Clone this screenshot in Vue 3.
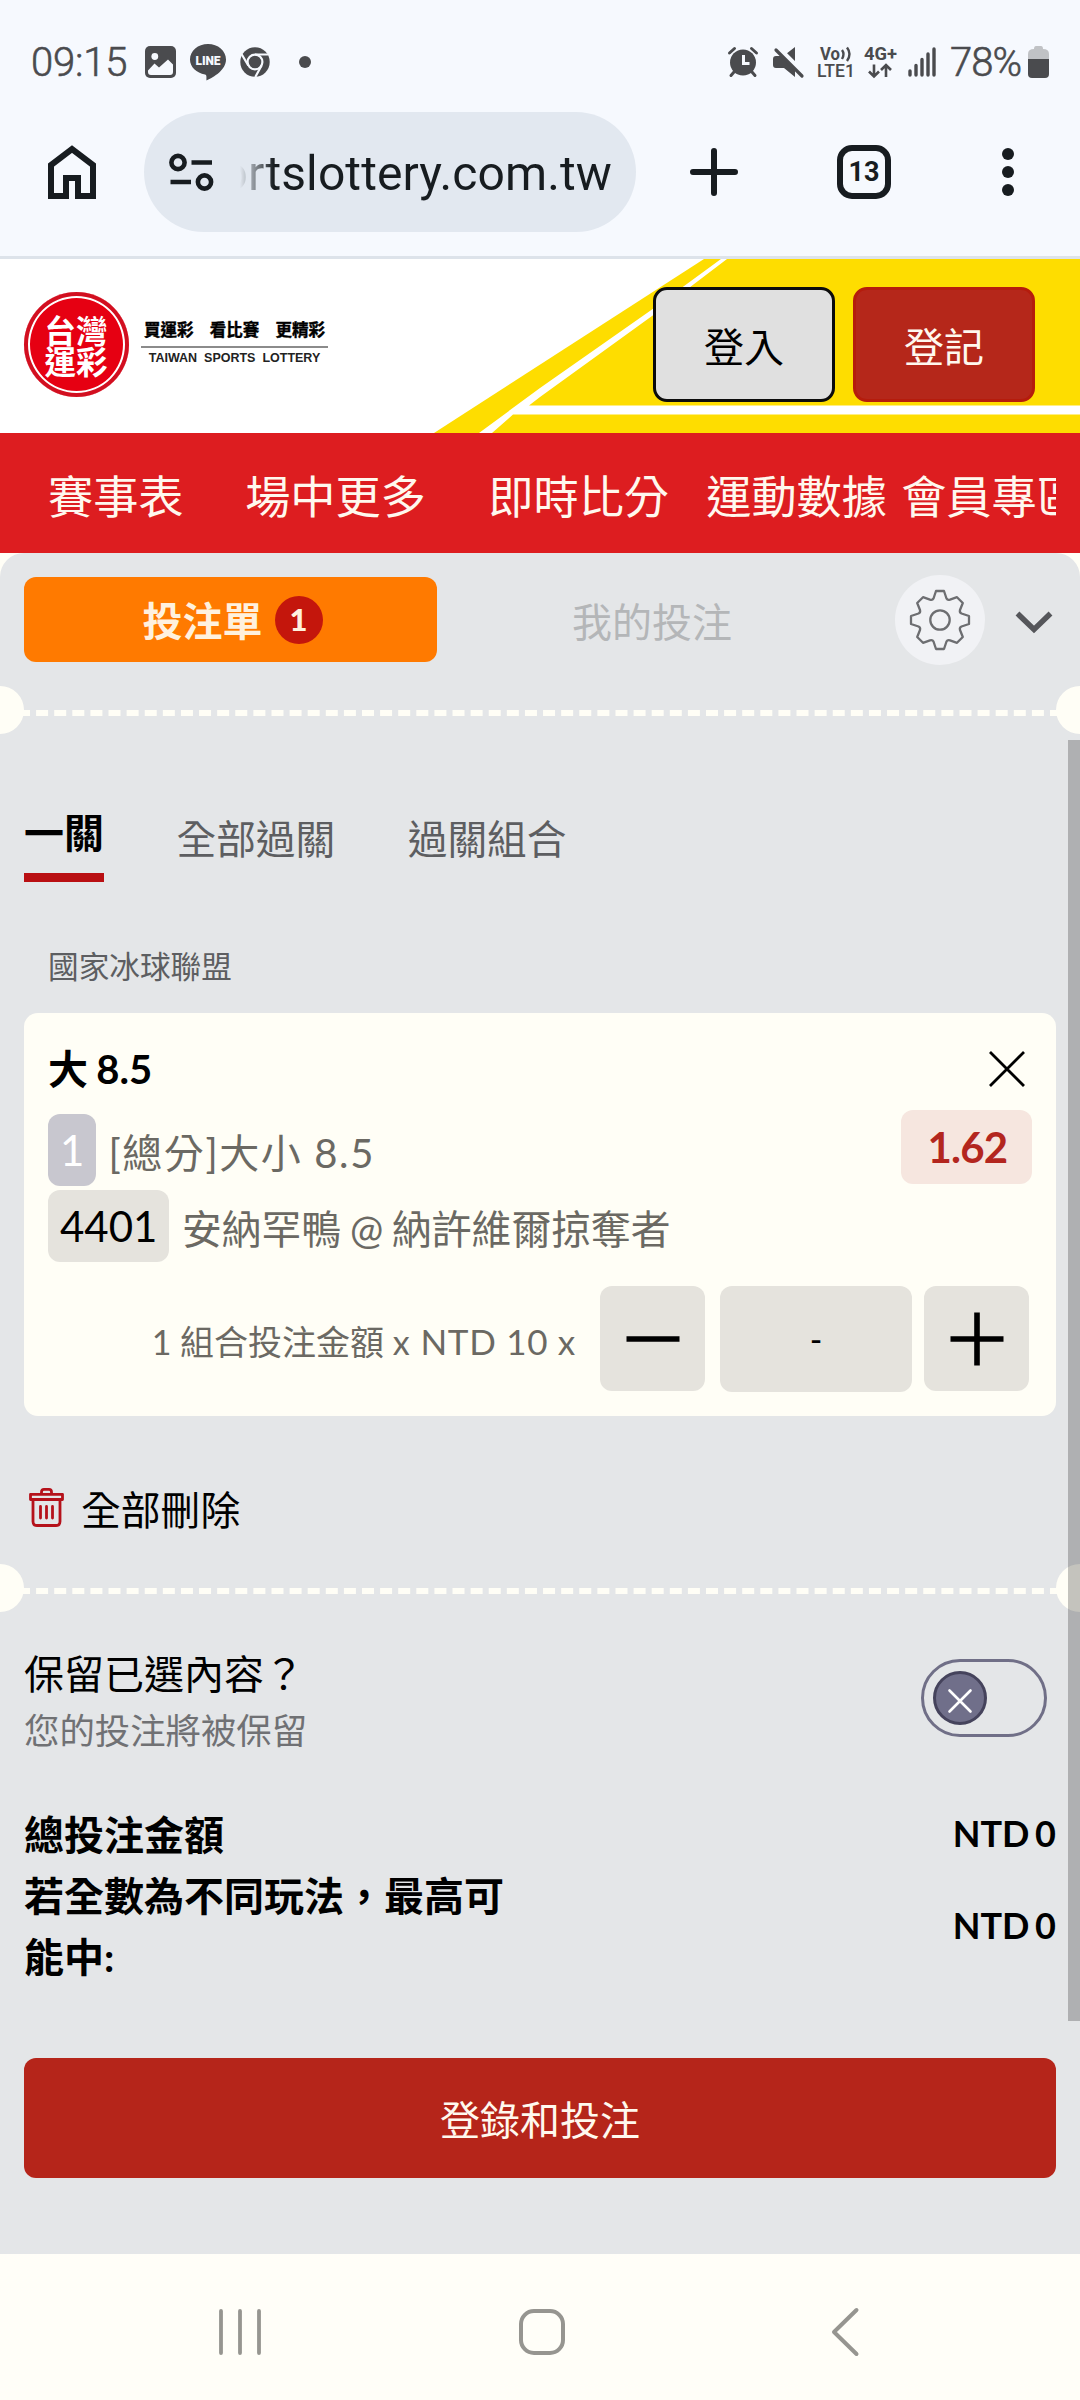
<script setup>
import { ref } from 'vue'

const navItems = [
  { label: '賽事表', gap: 61.6 },
  { label: '場中更多', gap: 62.4 },
  { label: '即時比分', gap: 37.2 },
  { label: '運動數據', gap: 14.2 },
  { label: '會員專區', gap: 0 },
]
const modes = ['一關', '全部過關', '過關組合']
const activeMode = ref(0)
const slogans = ['買運彩', '看比賽', '更精彩']
const totals = [
  { label: '總投注金額', value: 'NTD 0' },
  { label: '若全數為不同玩法，最高可能中:', value: 'NTD 0' },
]
</script>

<template>
  <div class="screen">
    <div class="status">
      <span class="clock">09:15</span>
      <svg class="s-img" width="31" height="32" viewBox="0 0 31 32">
        <rect width="31" height="32" rx="5" fill="#4a4b4e" />
        <circle cx="9.800" cy="10.500" r="3.400" fill="#f6f9fe" />
        <path d="M3 24.500 9.500 17.500 14 21.500 23 13.500 28 18.500V26Q28 29 25 29H6Q3 29 3 26Z" fill="#f6f9fe" />
      </svg>
      <svg class="s-line" width="36" height="37" viewBox="0 0 36 37">
        <path d="M18 0C8 0 0 6.800 0 15.500 0 23 6.500 29 15 30.500 17 31 16.300 33.500 16.500 36.500 24 33 36 26 36 15.500 36 6.800 28 0 18 0Z" fill="#4a4b4e" />
        <text x="18" y="20.600" text-anchor="middle" textLength="25" font-size="12" font-weight="900" font-family="Roboto, sans-serif" fill="#f6f9fe">LINE</text>
      </svg>
      <svg class="s-chrome" width="30" height="30" viewBox="0 0 30 30">
        <circle cx="15" cy="15" r="14.700" fill="#4a4b4e" />
        <circle cx="15" cy="15" r="7.400" fill="#4a4b4e" stroke="#f6f9fe" stroke-width="2.200" />
        <path d="M15 7.500H28.500M8.300 18.500 1.500 7M21.600 18.500 15.300 30" stroke="#f6f9fe" stroke-width="2.200" fill="none" />
      </svg>
      <i class="dot"></i>
      <div class="status-right">
        <svg width="30" height="30" viewBox="0 0 30 30">
          <circle cx="15" cy="15.500" r="13" fill="#4a4b4e" />
          <path d="M1.500 6 6.500 1.500M28.500 6 23.500 1.500M6 25 3 28.500M24 25 27 28.500" stroke="#4a4b4e" stroke-width="3" stroke-linecap="round" />
          <path d="M15.500 8V16.500H21.500" stroke="#f6f9fe" stroke-width="3" fill="none" />
        </svg>
        <svg class="mute" width="31" height="31" viewBox="0 0 31 31">
          <path d="M22 0V14.500L13 7ZM3 9H8L22 23V30L11 21H3Q0 21 0 18V12Q0 9 3 9Z" fill="#4a4b4e" />
          <path d="M6 0 31 25" stroke="#f6f9fe" stroke-width="2.500" />
          <path d="M3 3 29 29" stroke="#4a4b4e" stroke-width="3.200" stroke-linecap="round" />
        </svg>
        <svg class="volte" width="38" height="32" viewBox="0 0 38 32">
          <g font-family="Roboto, sans-serif" fill="#4a4b4e">
            <text x="3" y="13.500" font-size="18" font-weight="700" textLength="20" lengthAdjust="spacingAndGlyphs">Vo</text>
            <text x="0" y="31" font-size="19" font-weight="500" textLength="38" lengthAdjust="spacingAndGlyphs">LTE1</text>
          </g>
          <path d="M25 4Q28 8 25 13M30 1.500Q35 8 30 15" fill="none" stroke="#4a4b4e" stroke-width="2.400" />
        </svg>
        <svg class="lte" width="33" height="32" viewBox="0 0 33 32">
          <text x="0" y="13.500" font-size="18" font-family="Roboto, sans-serif" font-weight="700" fill="#4a4b4e" textLength="33" lengthAdjust="spacingAndGlyphs">4G+</text>
          <path d="M10 18.500V30M5 25.500 10 30.500 15 25.500M22 31V19.500M17 24 22 19 27 24" fill="none" stroke="#4a4b4e" stroke-width="2.600" />
        </svg>
        <svg class="signal" width="28" height="30" viewBox="0 0 28 30">
          <path d="M2 24V28M8 18.500V28M14 12.500V28M20 7V28M26 2V28" stroke="#4a4b4e" stroke-width="3.400" stroke-linecap="round" />
        </svg>
        <span class="pct">78%</span>
        <svg class="batt" width="21" height="32" viewBox="0 0 21 32">
          <path d="M6 3Q6 0 8 0H13Q15 0 15 3 21 3 21 8V14H0V8Q0 3 6 3Z" fill="#c0c2c5" />
          <path d="M0 13H21V28Q21 32 17 32H4Q0 32 0 28Z" fill="#4a4b4e" />
        </svg>
      </div>
    </div>

    <div class="browser">
      <svg class="home" width="48" height="54" viewBox="0 0 48 54">
        <path d="M3 51V20L24 4 45 20V51H30V33H18V51Z" fill="none" stroke="#171c20" stroke-width="6" />
      </svg>
      <div class="omnibox">
        <svg width="45" height="39" viewBox="0 0 45 39">
          <g fill="none" stroke="#171c20" stroke-width="4.600">
            <circle cx="9" cy="9.500" r="6.600" /><circle cx="35.500" cy="29" r="6.600" />
            <path d="M22.500 9.500H43M1.500 29H22" />
          </g>
        </svg>
        <div class="url"><span>sportslottery.com.tw</span></div>
      </div>
      <svg class="plus" width="48" height="48" viewBox="0 0 48 48"><path d="M24 3V45M3 24H45" stroke="#171c20" stroke-width="6" stroke-linecap="round" /></svg>
      <div class="tabs-count">13</div>
      <svg class="more" width="12" height="48" viewBox="0 0 12 48"><g fill="#171c20"><circle cx="6" cy="6" r="6" /><circle cx="6" cy="24" r="6" /><circle cx="6" cy="42" r="6" /></g></svg>
    </div>

    <header class="site-head">
      <svg class="rays" width="646" height="174" viewBox="434 259 646 174">
        <path d="M434 433 704 259H1080V433Z" fill="#fedd00" />
        <path d="M479 433 540 388 652 309.500 721 259H727L652 316 540 397 529 405.500H1080V414.500H513L492 433Z" fill="#fff" />
      </svg>
      <div class="brand">
        <div class="seal"><div>台灣運彩</div></div>
        <div class="brand-text">
          <div class="slogan"><span v-for="s in slogans" :key="s">{{ s }}</span></div>
          <div class="brand-en">TAIWAN&nbsp; SPORTS&nbsp; LOTTERY</div>
        </div>
      </div>
      <button class="btn login">登入</button>
      <button class="btn register">登記</button>
    </header>

    <nav class="nav">
      <div class="nav-clip">
        <a v-for="n in navItems" :key="n.label" :style="{ marginRight: n.gap + 'px' }">{{ n.label }}</a>
      </div>
    </nav>

    <main class="slip-wrap">
      <div class="slip">
        <div class="slip-tabs">
          <div class="slip-tab active"><span>投注單</span><b>1</b></div>
          <div class="slip-tab">我的投注</div>
          <div class="gear">
            <svg width="62" height="62" viewBox="-31 -31 62 62" fill="none" stroke="#6d6e71" stroke-width="2.300" stroke-linejoin="round">
              <circle r="9.700" />
              <path d="M-4 -29H4L6.500 -21.500Q7.500 -19.500 10 -20.300L17 -22.800 22.800 -17 20 -10Q19.300 -7.500 21.500 -6.500L29 -4V4L21.500 6.500Q19.300 7.500 20 10L22.800 17 17 22.800 10 20.300Q7.500 19.500 6.500 21.500L4 29H-4L-6.500 21.500Q-7.500 19.500 -10 20.300L-17 22.800 -22.800 17 -20 10Q-19.300 7.500 -21.500 6.500L-29 4V-4L-21.500 -6.500Q-19.300 -7.500 -20 -10L-22.800 -17 -17 -22.800 -10 -20.300Q-7.500 -19.500 -6.500 -21.500Z" />
            </svg>
          </div>
          <svg class="chev" width="38" height="22" viewBox="0 0 38 22"><path d="M2.500 2.500 19 18.500 35.500 2.500" fill="none" stroke="#55565a" stroke-width="5.500" /></svg>
        </div>

        <div class="perf"><i></i></div>

        <div class="modes">
          <span v-for="(m, i) in modes" :key="m" :class="{ on: i === activeMode }" @click="activeMode = i">{{ m }}</span>
        </div>

        <div class="league">國家冰球聯盟</div>

        <section class="card">
          <div class="pick">
            <strong>大 8.5</strong>
            <svg width="36" height="36" viewBox="0 0 36 36"><path d="M1 1 35 35M35 1 1 35" stroke="#000" stroke-width="2.800" /></svg>
          </div>
          <div class="market">
            <span class="tag min">1</span><span class="market-name">[總分]大小 8.5</span>
            <span class="odds">1.62</span>
          </div>
          <div class="match"><span class="tag">4401</span><span class="teams">安納罕鴨 @ 納許維爾掠奪者</span></div>
          <div class="stake">
            <span class="stake-label">1 組合投注金額 x <em>NTD 10 x</em></span>
            <button class="step"><svg width="54" height="54" viewBox="0 0 54 54"><path d="M0.500 27H53.500" stroke="#000" stroke-width="5.600" /></svg></button>
            <span class="amount">-</span>
            <button class="step"><svg width="54" height="54" viewBox="0 0 54 54"><path d="M0.500 27H53.500M27 0.500V53.500" stroke="#000" stroke-width="5.600" /></svg></button>
          </div>
        </section>

        <div class="clear">
          <svg width="35" height="39" viewBox="0 0 35 39" fill="none" stroke="#b5121b" stroke-width="2.800" stroke-linejoin="round" stroke-linecap="round">
            <path d="M1.500 6.300H33.500V11.500H1.500ZM12.500 6V4Q12.500 1.400 15 1.400H20Q22.500 1.400 22.500 4V6M4 11.500V33.500Q4 37.500 8 37.500H27Q31 37.500 31 33.500V11.500M11.500 18.500V30M17.500 18.500V30M23.500 18.500V30" />
          </svg>
          <span>全部刪除</span>
        </div>

        <div class="perf second"><i></i></div>

        <div class="keep">
          <div>
            <div class="keep-title">保留已選內容？</div>
            <div class="keep-sub">您的投注將被保留</div>
          </div>
          <div class="toggle">
            <div class="knob"><svg width="24" height="24" viewBox="0 0 24 24"><path d="M1.500 1.500 22.500 22.500M22.500 1.500 1.500 22.500" stroke="#fff" stroke-width="2.600" stroke-linecap="round" /></svg></div>
          </div>
        </div>

        <div class="totals">
          <div v-for="t in totals" :key="t.label" class="total"><span class="t-label">{{ t.label }}</span><span class="t-val">{{ t.value }}</span></div>
        </div>

        <button class="submit">登錄和投注</button>
        <div class="scrollbar"></div>
      </div>
    </main>

    <footer class="sysnav">
      <svg width="42" height="46" viewBox="0 0 42 46"><path d="M2 2V44M21 2V44M40 2V44" stroke="#969590" stroke-width="3.800" stroke-linecap="round" /></svg>
      <svg class="sys-home" width="46" height="46" viewBox="0 0 46 46"><rect x="2" y="2" width="42" height="42" rx="13" fill="none" stroke="#969590" stroke-width="4" /></svg>
      <svg class="sys-back" width="28" height="48" viewBox="0 0 28 48"><path d="M25.500 2 3 24 25.500 46" fill="none" stroke="#969590" stroke-width="4" stroke-linecap="round" stroke-linejoin="round" /></svg>
    </footer>
  </div>
</template>

<style>
body { margin: 0; background: #fffef6; }
</style>

<style scoped>
* { box-sizing: border-box; }
.screen {
  width: 1080px;
  height: 2400px;
  overflow: hidden;
  display: flex;
  flex-direction: column;
  background: #fffef6;
  font-family: Lato, "Noto Sans CJK TC", sans-serif;
  font-size: 40px;
  line-height: 60px;
  color: #000;
}
svg { display: block; flex: none; overflow: visible; }
button { border: 0; padding: 0; margin: 0; font: inherit; color: inherit; display: flex; align-items: center; justify-content: center; }

.status { height: 112px; background: #f6f9fe; display: flex; align-items: center; padding: 12px 31px 0; font-family: Roboto, sans-serif; color: #4a4b4e; }
.clock { font-size: 40px; width: 114px; letter-spacing: -0.2px; font-weight: 300; -webkit-text-stroke: 0.6px #4a4b4e; padding-top: 2px; }
.s-line { margin-left: 14px; }
.s-chrome { margin-left: 14px; }
.dot { width: 12px; height: 12px; border-radius: 50%; background: #4a4b4e; margin-left: 29px; }
.status-right { margin-left: auto; display: flex; align-items: center; }
.mute { margin-left: 15px; }
.volte { margin-left: 13px; }
.lte { margin-left: 9px; }
.signal { margin-left: 11px; }
.pct { margin-left: 14px; font-size: 40px; width: 72px; letter-spacing: -1px; white-space: nowrap; font-weight: 300; -webkit-text-stroke: 0.6px #4a4b4e; padding-top: 2px; }
.batt { margin-left: 6px; }

.browser { height: 147px; background: #f6f9fe; border-bottom: 3px solid #dde3ea; display: flex; align-items: center; padding: 0 66px 24px 48px; }
.omnibox { margin-left: 48px; width: 492px; height: 120px; border-radius: 60px; background: #e2e8f0; display: flex; align-items: center; padding: 0 24px 0 25px; }
.url { margin-left: 26px; flex: 1; overflow: hidden; display: flex; justify-content: flex-end; padding-top: 3px; font: 400 48px/64px Roboto, sans-serif; letter-spacing: 0.1px; color: #171c20; -webkit-mask-image: linear-gradient(90deg, transparent 0, #000 34px); mask-image: linear-gradient(90deg, transparent 0, #000 34px); }
.plus { margin-left: 54px; }
.tabs-count { margin-left: 99px; width: 54px; height: 54px; border: 6px solid #171c20; border-radius: 15px; font: 700 27px/43px Roboto, sans-serif; text-align: center; color: #171c20; }
.more { margin-left: auto; }

.site-head { position: relative; height: 174px; background: #fff; display: flex; align-items: center; padding: 0 45px 3px 24px; }
.rays { position: absolute; right: 0; top: 0; }
.brand { flex: 1; display: flex; align-items: center; }
.seal { width: 105px; height: 105px; border-radius: 50%; background: #e60012; box-shadow: inset 0 0 0 4px #d20f20, inset 0 0 0 6px #fff; color: #fff; display: flex; align-items: center; justify-content: center; font: 700 31.500px/31px "Noto Sans CJK TC", sans-serif; }
.seal div { width: 64px; word-break: break-all; }
.brand-text { margin-left: 12px; width: 187px; font-family: "Noto Sans CJK TC", sans-serif; }
.slogan { display: flex; justify-content: space-between; padding: 0 3px 6px; border-bottom: 2px solid #8b8b8b; font-size: 16.500px; line-height: 22px; font-weight: 700; -webkit-text-stroke: 0.4px #000; }
.brand-en { font: 700 12.500px/20px "Liberation Sans", sans-serif; text-align: center; white-space: nowrap; color: #222; padding-bottom: 2px; margin-bottom: 1px; }
.btn { position: relative; width: 182px; height: 115px; border-radius: 14px; padding-top: 4px; }
.login { background: #e0e0e0; border: 3px solid #0c0c0c; }
.register { margin-left: 18px; background: #b5271a; border: 3px solid #b51c0c; color: #fff8ee; }

.nav { height: 120px; background: #dd1d20; padding: 0 24px 0 48px; }
.nav-clip { height: 120px; overflow: hidden; display: flex; align-items: center; padding-top: 8px; }
.nav a { flex: none; font-size: 45.200px; color: #fff8ee; white-space: nowrap; }

.slip-wrap { height: 1701px; }
.slip { position: relative; height: 1701px; background: #e4e6e8; border-radius: 24px 24px 0 0; overflow: hidden; padding: 24px 24px 0; }
.slip-tabs { height: 85px; display: flex; align-items: center; }
.slip-tab { width: 413px; height: 85px; display: flex; align-items: center; justify-content: center; color: #b4b6b8; padding-top: 4px; }
.slip-tab.active { background: #ff7a00; border-radius: 12px; color: #fff1de; font-weight: 700; padding: 0; padding-left: 4px; }
.slip-tab.active span { padding-top: 3px; }
.slip-tab b { width: 48px; height: 48px; border-radius: 50%; background: #c4160c; margin-left: 12px; text-align: center; font-size: 31px; line-height: 47px; color: #fff1de; }
.slip-tab:nth-child(2) { width: 430px; }
.gear { width: 90px; height: 90px; border-radius: 50%; background: #f1f2f5; margin-left: 28px; display: flex; align-items: center; justify-content: center; flex: none; }
.chev { margin-left: 30px; margin-top: 5px; }

.perf { position: relative; height: 48px; margin: 24px -24px 0; display: flex; justify-content: space-between; }
.perf::before, .perf::after { content: ""; width: 24px; height: 48px; background: #fffef6; border-radius: 0 24px 24px 0; }
.perf::after { border-radius: 24px 0 0 24px; }
.perf i { position: absolute; left: 18px; right: 18px; top: 24px; border-top: 6px dashed #fffef6; }
.perf.second { margin-top: 24px; }

.modes { margin-top: 62px; display: flex; gap: 72.500px; }
.modes span { height: 86px; line-height: 85px; color: #5d5e61; font-size: 39.700px; }
.modes .on { color: #000; font-size: 40px; font-weight: 700; line-height: 75px; border-bottom: 9px solid #b90f12; }
.league { margin: 55px 0 0 24px; font-size: 30.650px; color: #5d5e61; }

.card { margin-top: 16px; height: 403px; background: #fffef6; border-radius: 14px; padding: 24px; }
.pick { display: flex; align-items: center; justify-content: space-between; height: 63px; padding-right: 7px; }
.pick strong { font-weight: 700; word-spacing: -1.500px; }
.market { display: flex; align-items: center; height: 76px; margin-top: 12px; color: #6b6963; }
.tag { height: 72px; line-height: 72px; padding: 0 12px; border-radius: 12px; background: #e5e3dd; color: #000; font-size: 42px; }
.tag.min { background: #c8c7cf; color: #fff; }
.market-name { margin-left: 12px; letter-spacing: 1.600px; padding-top: 5px; }
.odds { margin-left: auto; width: 131px; height: 74px; line-height: 74px; margin-bottom: 6px; text-align: center; background: #f6e6df; color: #b3261e; border-radius: 12px; font-size: 42px; font-weight: 700; letter-spacing: -0.800px; padding-left: 2px; }
.match { display: flex; align-items: center; height: 76px; color: #6b6963; }
.teams { margin-left: 12.500px; padding-top: 5px; font-size: 39.800px; word-spacing: -1.400px; }
.stake { display: flex; justify-content: flex-end; align-items: center; height: 106px; margin-top: 22px; padding-right: 3px; }
.stake-label { font-size: 34px; color: #6b6963; margin-right: 24px; padding-top: 4px; white-space: pre; }
.stake-label em { font-style: normal; font-size: 35px; letter-spacing: 0.7px; margin-left: 2px; }
.step { width: 105px; height: 105px; border-radius: 12px; background: #e5e3dd; align-self: flex-start; }
.amount { width: 192px; height: 106px; margin: 0 12px 0 15px; border-radius: 12px; background: #e5e3dd; line-height: 106px; text-align: center; font-size: 34px; }

.clear { height: 60px; margin-top: 64px; display: flex; align-items: center; gap: 17px; padding-left: 5px; }
.clear svg { margin-bottom: 6px; }
.clear span { font-size: 39.800px; }
.keep { margin-top: 32px; display: flex; justify-content: space-between; padding-right: 9px; }
.keep-title { line-height: 60px; }
.keep-sub { font-size: 35.400px; line-height: 54px; color: #707174; }
.toggle { margin-top: 15px; width: 126px; height: 78px; border: 3px solid #706f87; border-radius: 39px; padding: 9px; }
.knob { width: 54px; height: 54px; border-radius: 50%; background: #706f8a; border: 3px solid #45435c; display: flex; align-items: center; justify-content: center; padding-top: 5px; }
.totals { margin-top: 47px; font-weight: 700; line-height: 61px; }
.total { display: flex; justify-content: space-between; align-items: center; }
.t-label { width: 490px; }
.t-val { font-size: 36px; line-height: 57px; padding-bottom: 4px; word-spacing: -3px; }
.submit { width: 1032px; height: 120px; margin-top: 70px; border-radius: 12px; background: #b5251a; color: #fff8ee; padding-top: 4px; }
.scrollbar { position: absolute; right: 0; top: 187px; width: 12px; height: 1281px; background: rgba(0, 0, 0, 0.23); }

.sysnav { height: 146px; background: #fffef8; display: flex; align-items: center; padding: 10px 0 0 219px; }
.sys-home { margin-left: 258px; }
.sys-back { margin-left: 266px; }
</style>
